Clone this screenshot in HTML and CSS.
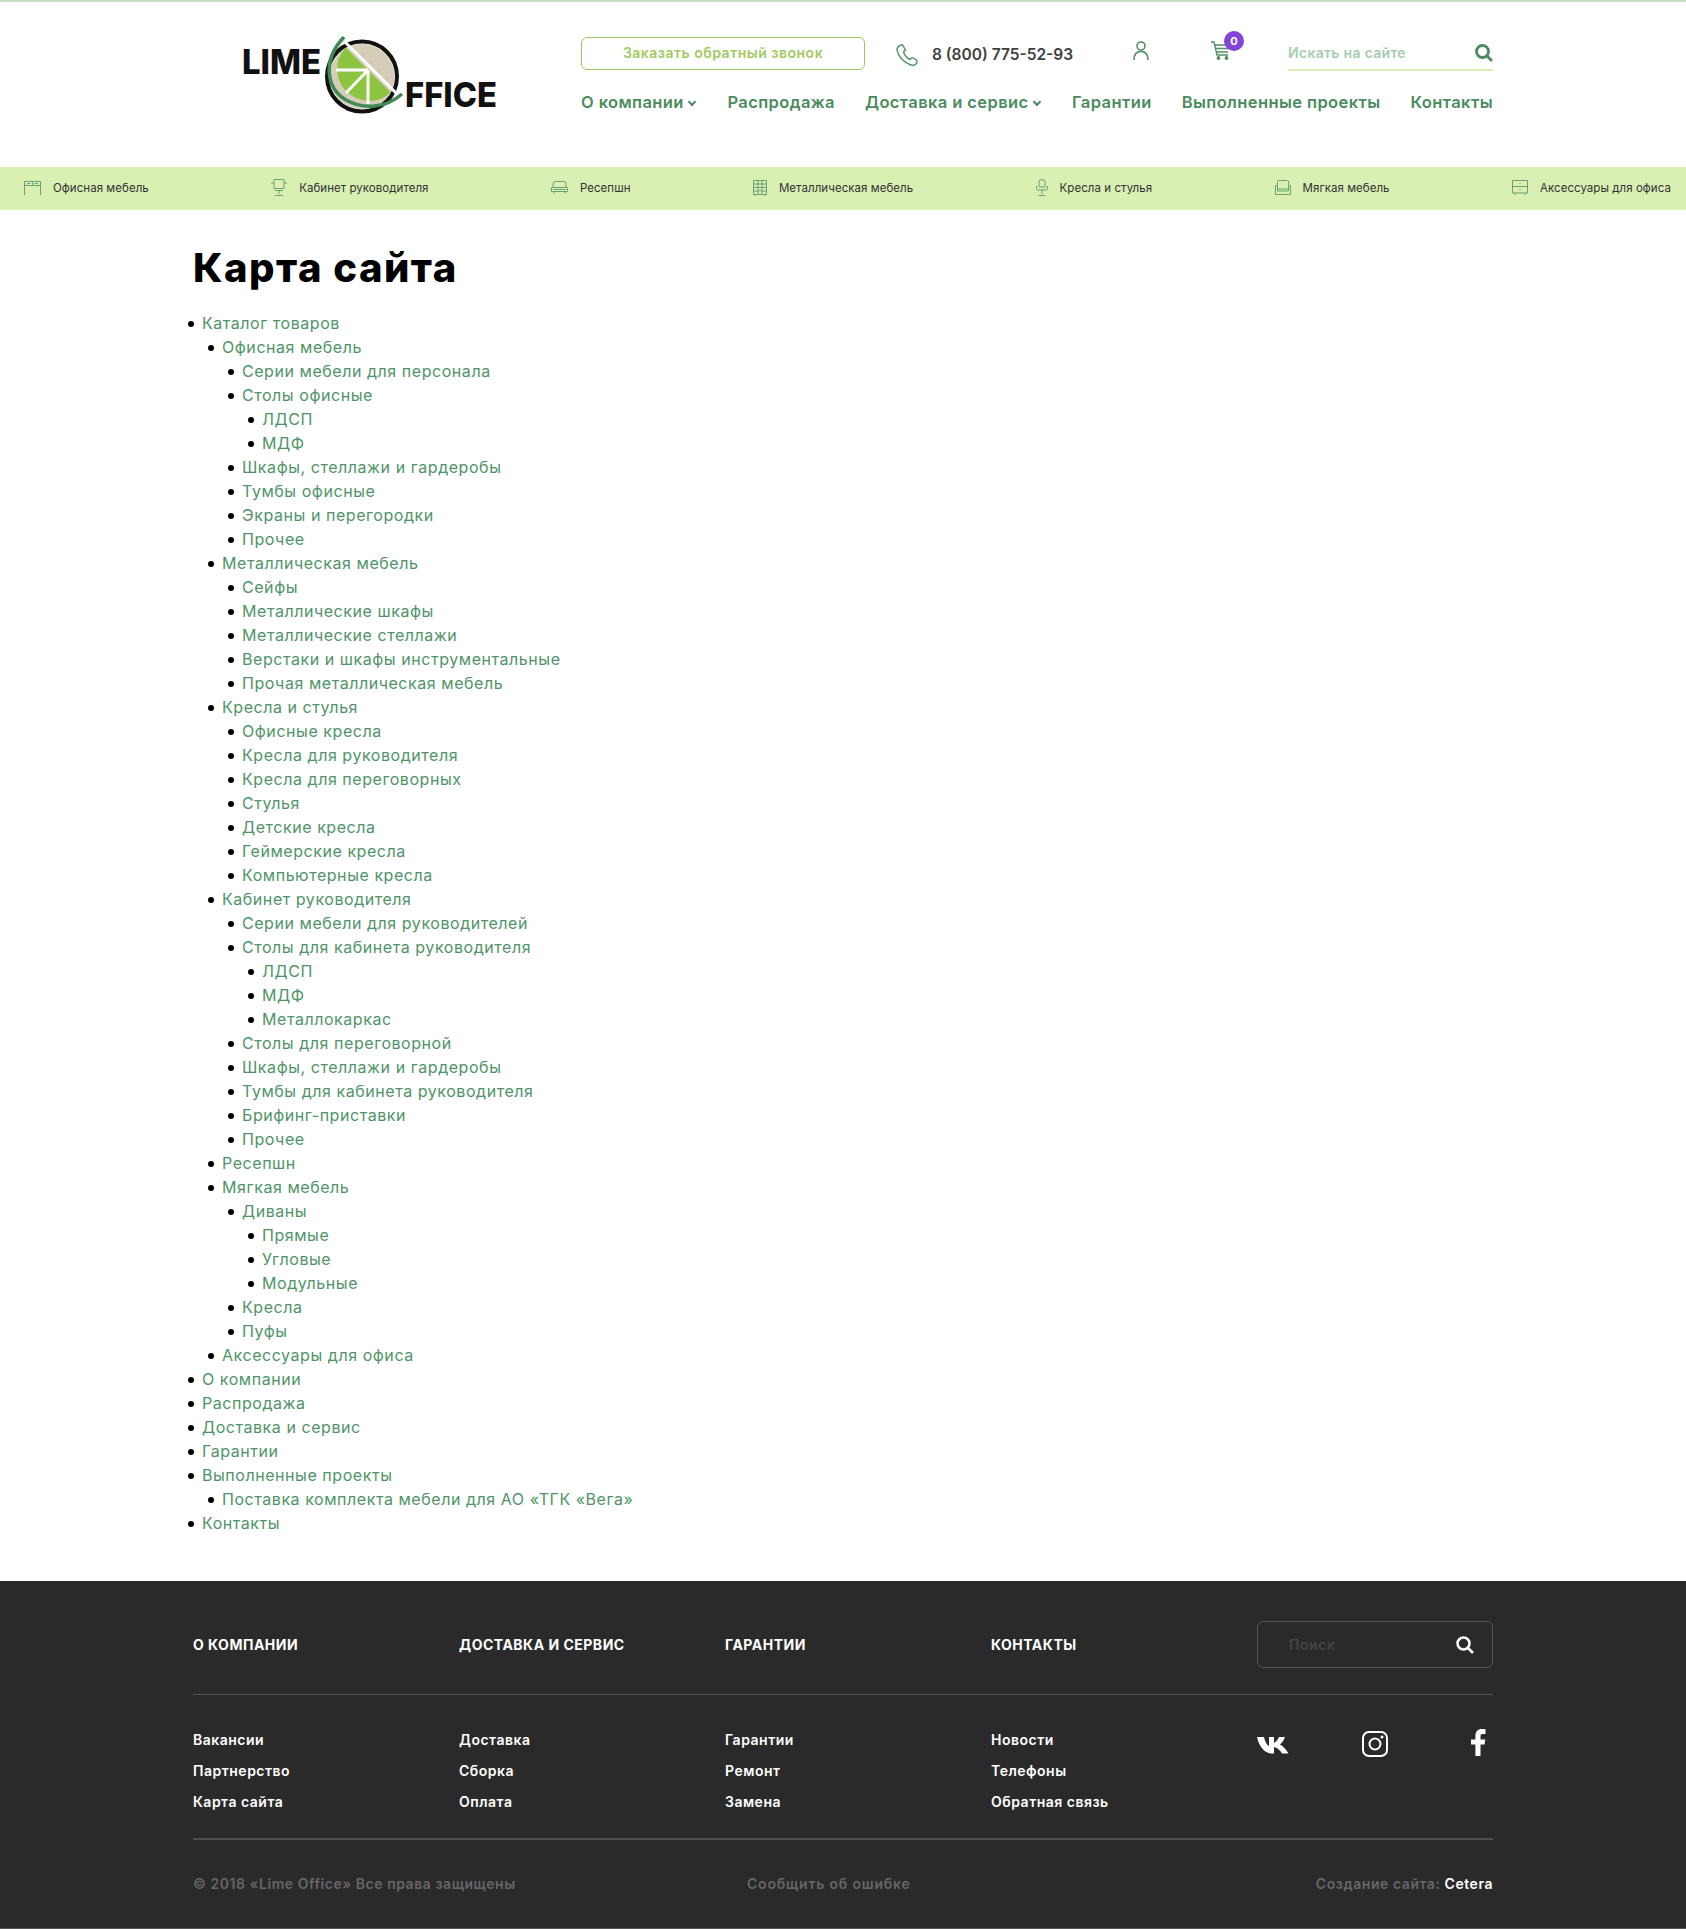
FILE: index.html
```html
<!DOCTYPE html>
<html lang="ru">
<head>
    <meta charset="UTF-8">
    <meta name="viewport" content="width=device-width, initial-scale=1.0">
    <title>Карта сайта</title>
    <link rel="stylesheet" href="styles.css">
</head>
<body>
    <header class="header">
        <div class="container header-inner">
            <a href="#" class="logo">
                <svg width="260" height="80" viewBox="240 36 260 80">
                    <circle cx="362" cy="76.5" r="35" fill="#fff" stroke="#111" stroke-width="4"/>
                    <circle cx="362" cy="76.5" r="32.500" fill="#d6cdb8"/>
                    <path d="M345.400 47.400A32 32 0 0 0 390.600 92.600Z" fill="#8cc540"/>
                    <path d="M343 40L400 97M336 70H368M368 70V104M368 70L346 93" stroke="#fff" stroke-width="3" fill="none"/>
                    <path d="M344 37C322 60 326 88 346 100C364 110 386 108 402 94" stroke="#3f8a55" stroke-width="3.500" fill="none"/>
                    <text x="242" y="74" class="logo-text" textLength="79" lengthAdjust="spacingAndGlyphs">LIME</text>
                    <text x="405" y="107" class="logo-text" textLength="92" lengthAdjust="spacingAndGlyphs">FFICE</text>
                </svg>
            </a>
            <div class="header-right">
                <div class="header-top">
                    <a href="#" class="call-btn">Заказать обратный звонок</a>
                    <a href="#" class="phone">
                        <svg width="22" height="22" viewBox="0 0 22 22" fill="none" stroke="#4f9163" stroke-width="1.400"><path d="M5 1C2 2 1 4 1 6C2 12 8 19 15 21C18 22 21 20 21 17.500L20.500 16L16 13.500L14 15.500C11 14 8.500 11 7.500 8L9.500 6L6.500 1Z"/></svg>
                        <span>8 (800) 775-52-93</span>
                    </a>
                    <a href="#" class="user-link">
                        <svg width="16" height="19" viewBox="0 0 16 19" fill="none" stroke="#4f9163" stroke-width="1.600"><circle cx="8" cy="5" r="4"/><path d="M1 19C1 13 4 10.500 8 10.500C12 10.500 15 13 15 19"/></svg>
                    </a>
                    <a href="#" class="cart-link">
                        <svg width="20" height="19" viewBox="0 0 20 19" fill="none" stroke="#4f9163" stroke-width="1.400"><path d="M0 1H3L6 14H17M4 4H19M5 7.500H18M5.500 11H17"/><circle cx="7.500" cy="17" r="1.200" fill="#4f9163"/><circle cx="15.500" cy="17" r="1.200" fill="#4f9163"/></svg>
                        <span class="cart-badge">0</span>
                    </a>
                    <form class="search">
                        <input type="text" placeholder="Искать на сайте">
                        <svg width="18" height="18" viewBox="0 0 18 18" fill="none" stroke="#4b8b5e" stroke-width="2.800"><circle cx="7.500" cy="7.500" r="6"/><path d="M12 12L17 17"/></svg>
                    </form>
                </div>
                <nav class="nav">
                    <a href="#">О компании <i class="chevron"></i></a>
                    <a href="#">Распродажа</a>
                    <a href="#">Доставка и сервис <i class="chevron"></i></a>
                    <a href="#">Гарантии</a>
                    <a href="#">Выполненные проекты</a>
                    <a href="#">Контакты</a>
                </nav>
            </div>
        </div>
    </header>

    <div class="catalog-bar">
        <a href="#"><svg width="17" height="14" viewBox="0 0 17 14" class="cat-icon"><path d="M.5 14V.5H16.500V14M.5 4.500H16.500M8.500 .5V4.500M3 2.500H6.500M10.500 2.500H14"/></svg>Офисная мебель</a>
        <a href="#"><svg width="16" height="17" viewBox="0 0 16 17" class="cat-icon"><path d="M3 .5H13V9.500H3ZM0 4H3M13 4H16M4 11.500H12M8 11.500V15M4 16.500H12"/></svg>Кабинет руководителя</a>
        <a href="#"><svg width="17" height="13" viewBox="0 0 17 13" class="cat-icon"><path d="M2 6V3Q2 .5 4.500 .5H12.500Q15 .5 15 3V6M.5 6.500H16.500V10.500H.5ZM3 10.500V12.500M14 10.500V12.500M2 8.500H15"/></svg>Ресепшн</a>
        <a href="#"><svg width="14" height="16" viewBox="0 0 14 16" class="cat-icon"><path d="M.5 .5H13.500V14.500H.5ZM.5 4H13.500M.5 7.500H13.500M.5 11H13.500M5 .5V14.500M9 .5V14.500M2 14.500V16M12 14.500V16"/></svg>Металлическая мебель</a>
        <a href="#"><svg width="12" height="17" viewBox="0 0 12 17" class="cat-icon"><path d="M3 6V3Q3 .5 6 .5Q9 .5 9 3V8H3V6M.5 7V9.500Q.5 11 2 11H10Q11.500 11 11.500 9.500V7M6 11V15M2.500 16.500H9.500"/></svg>Кресла и стулья</a>
        <a href="#"><svg width="16" height="16" viewBox="0 0 16 16" class="cat-icon"><path d="M2.500 5V1.500Q2.500 .5 3.500 .5H12.500Q13.500 .5 13.500 1.500V5M.5 5.500H2.500V11H13.500V5.500H15.500V14.500H.5ZM2.500 9H13.500"/></svg>Мягкая мебель</a>
        <a href="#"><svg width="16" height="15" viewBox="0 0 16 15" class="cat-icon"><path d="M.5 .5H15.500V13H.5ZM.5 6.500H15.500M3 13V15M13 13V15M8 3V4M8 9V10"/></svg>Аксессуары для офиса</a>
    </div>

    <main class="container content">
        <h1>Карта сайта</h1>
        <ul class="sitemap">
            <li><a href="#">Каталог товаров</a>
                <ul>
                    <li><a href="#">Офисная мебель</a>
                        <ul>
                            <li><a href="#">Серии мебели для персонала</a></li>
                            <li><a href="#">Столы офисные</a>
                                <ul>
                                    <li><a href="#">ЛДСП</a></li>
                                    <li><a href="#">МДФ</a></li>
                                </ul>
                            </li>
                            <li><a href="#">Шкафы, стеллажи и гардеробы</a></li>
                            <li><a href="#">Тумбы офисные</a></li>
                            <li><a href="#">Экраны и перегородки</a></li>
                            <li><a href="#">Прочее</a></li>
                        </ul>
                    </li>
                    <li><a href="#">Металлическая мебель</a>
                        <ul>
                            <li><a href="#">Сейфы</a></li>
                            <li><a href="#">Металлические шкафы</a></li>
                            <li><a href="#">Металлические стеллажи</a></li>
                            <li><a href="#">Верстаки и шкафы инструментальные</a></li>
                            <li><a href="#">Прочая металлическая мебель</a></li>
                        </ul>
                    </li>
                    <li><a href="#">Кресла и стулья</a>
                        <ul>
                            <li><a href="#">Офисные кресла</a></li>
                            <li><a href="#">Кресла для руководителя</a></li>
                            <li><a href="#">Кресла для переговорных</a></li>
                            <li><a href="#">Стулья</a></li>
                            <li><a href="#">Детские кресла</a></li>
                            <li><a href="#">Геймерские кресла</a></li>
                            <li><a href="#">Компьютерные кресла</a></li>
                        </ul>
                    </li>
                    <li><a href="#">Кабинет руководителя</a>
                        <ul>
                            <li><a href="#">Серии мебели для руководителей</a></li>
                            <li><a href="#">Столы для кабинета руководителя</a>
                                <ul>
                                    <li><a href="#">ЛДСП</a></li>
                                    <li><a href="#">МДФ</a></li>
                                    <li><a href="#">Металлокаркас</a></li>
                                </ul>
                            </li>
                            <li><a href="#">Столы для переговорной</a></li>
                            <li><a href="#">Шкафы, стеллажи и гардеробы</a></li>
                            <li><a href="#">Тумбы для кабинета руководителя</a></li>
                            <li><a href="#">Брифинг-приставки</a></li>
                            <li><a href="#">Прочее</a></li>
                        </ul>
                    </li>
                    <li><a href="#">Ресепшн</a></li>
                    <li><a href="#">Мягкая мебель</a>
                        <ul>
                            <li><a href="#">Диваны</a>
                                <ul>
                                    <li><a href="#">Прямые</a></li>
                                    <li><a href="#">Угловые</a></li>
                                    <li><a href="#">Модульные</a></li>
                                </ul>
                            </li>
                            <li><a href="#">Кресла</a></li>
                            <li><a href="#">Пуфы</a></li>
                        </ul>
                    </li>
                    <li><a href="#">Аксессуары для офиса</a></li>
                </ul>
            </li>
            <li><a href="#">О компании</a></li>
            <li><a href="#">Распродажа</a></li>
            <li><a href="#">Доставка и сервис</a></li>
            <li><a href="#">Гарантии</a></li>
            <li><a href="#">Выполненные проекты</a>
                <ul>
                    <li><a href="#">Поставка комплекта мебели для АО «ТГК «Вега»</a></li>
                </ul>
            </li>
            <li><a href="#">Контакты</a></li>
        </ul>
    </main>

    <footer class="footer">
        <div class="container">
            <div class="footer-top">
                <a href="#" class="footer-title">О компании</a>
                <a href="#" class="footer-title">Доставка и сервис</a>
                <a href="#" class="footer-title">Гарантии</a>
                <a href="#" class="footer-title">Контакты</a>
                <form class="footer-search">
                    <input type="text" placeholder="Поиск">
                    <svg width="18" height="18" viewBox="0 0 18 18" fill="none" stroke="#fff" stroke-width="2.500"><circle cx="7.500" cy="7.500" r="6"/><path d="M12 12L17 17"/></svg>
                </form>
            </div>
            <div class="footer-links">
                <ul>
                    <li><a href="#">Вакансии</a></li>
                    <li><a href="#">Партнерство</a></li>
                    <li><a href="#">Карта сайта</a></li>
                </ul>
                <ul>
                    <li><a href="#">Доставка</a></li>
                    <li><a href="#">Сборка</a></li>
                    <li><a href="#">Оплата</a></li>
                </ul>
                <ul>
                    <li><a href="#">Гарантии</a></li>
                    <li><a href="#">Ремонт</a></li>
                    <li><a href="#">Замена</a></li>
                </ul>
                <ul>
                    <li><a href="#">Новости</a></li>
                    <li><a href="#">Телефоны</a></li>
                    <li><a href="#">Обратная связь</a></li>
                </ul>
                <div class="social">
                    <a href="#" class="social-vk"><svg width="32" height="18" viewBox="0 0 32 18" fill="#fff"><path d="M0 1H7C8 6 10 9 12 10V1H17V7C19 6 21 3 22 1H28C27 4 25 7 23 8.500C26 10 29 13 31.500 17.500H25C23 14 20 11.500 17 11V17.500H15C8 17.500 2 11 0 1Z"/></svg></a>
                    <a href="#" class="social-insta"><svg width="26" height="26" viewBox="0 0 26 26" fill="none" stroke="#fff" stroke-width="2"><rect x="1" y="1" width="24" height="24" rx="6"/><circle cx="13" cy="13" r="5.500"/><circle cx="20" cy="6" r="1.500" fill="#fff" stroke="none"/></svg></a>
                    <a href="#" class="social-fb"><svg width="15" height="27" viewBox="0 0 15 27" fill="#fff"><path d="M9.500 27V15.500H13.500L14.300 10.500H9.500V7.500C9.500 5.800 10 5 11.800 5H14.500V.3C14 .2 12.500 0 10.800 0C7 0 4.400 2.400 4.400 6.800V10.500H0V15.500H4.400V27Z"/></svg></a>
                </div>
            </div>
            <div class="footer-bottom">
                <span>© 2018 «Lime Office» Все права защищены</span>
                <a href="#" class="report-link">Сообщить об ошибке</a>
                <span>Создание сайта: <a href="#" class="cetera">Cetera</a></span>
            </div>
        </div>
    </footer>
</body>
</html>
```

FILE: styles.css
```css
* {
    box-sizing: border-box;
}
body {
    margin: 0;
    font-family: Inter, "Noto Sans", sans-serif;
    color: #000;
    background: #fff;
}
a {
    text-decoration: none;
    color: inherit;
}
ul {
    margin: 0;
    padding: 0;
}
.container {
    width: 1300px;
    margin: 0 auto;
}

/* шапка */
.header {
    height: 167px;
    border-top: 2px solid #c5dcc9;
}
.header-inner {
    display: flex;
}
.logo {
    display: block;
    margin: 34px 0 0 47px;
    height: 80px;
}
.logo-text {
    font-family: Inter, sans-serif;
    font-weight: 800;
    font-size: 34px;
    fill: #111;
}
.header-right {
    width: 912px;
    margin-left: auto;
    padding-top: 35px;
}
.header-top {
    display: flex;
    align-items: center;
    height: 33px;
}
.call-btn {
    width: 284px;
    height: 33px;
    line-height: 30px;
    text-align: center;
    border: 1px solid #9ccb5c;
    border-radius: 6px;
    color: #a2cb62;
    font-size: 14px;
    font-weight: 600;
    letter-spacing: .5px;
}
.phone {
    display: flex;
    align-items: center;
    gap: 14px;
    margin: 2px 0 0 31px;
    color: #3f3f3f;
    font-size: 15.5px;
    font-weight: 600;
}
.user-link {
    display: block;
    height: 19px;
    margin: -6px 0 0 60px;
}
.cart-link {
    display: block;
    position: relative;
    height: 19px;
    margin: -6px 0 0 62px;
}
.cart-badge {
    position: absolute;
    top: -10px;
    left: 13px;
    width: 20px;
    height: 20px;
    border-radius: 50%;
    background: #8343d8;
    color: #fff;
    font-size: 11px;
    font-weight: 700;
    line-height: 20px;
    text-align: center;
}
.search {
    display: flex;
    align-items: center;
    width: 205px;
    height: 34px;
    margin-left: auto;
    border-bottom: 2px solid #d9f0b2;
}
.search input {
    flex: 1;
    min-width: 0;
    padding: 0;
    border: none;
    outline: none;
    font-family: inherit;
    font-size: 14px;
    font-weight: 600;
    letter-spacing: .3px;
}
.search input::placeholder {
    color: #a6cdb0;
    opacity: 1;
}
.nav {
    display: flex;
    justify-content: space-between;
    margin-top: 20px;
    color: #4b8b5e;
    font-size: 16.5px;
    font-weight: 600;
    line-height: 24px;
    letter-spacing: .4px;
}
.chevron {
    display: inline-block;
    width: 6px;
    height: 6px;
    margin: 0 2px 3px 1px;
    border-right: 2px solid #4b8b5e;
    border-bottom: 2px solid #4b8b5e;
    transform: rotate(45deg);
}

/* каталог */
.catalog-bar {
    display: flex;
    justify-content: space-between;
    align-items: center;
    height: 43px;
    padding: 0 15px 2px 24px;
    background: #d9f0b2;
    color: #333;
    font-size: 11.5px;
    letter-spacing: .05px;
}
.catalog-bar a {
    display: flex;
    align-items: center;
    gap: 12px;
}
.cat-icon {
    fill: none;
    stroke: #66a274;
    stroke-width: 1;
}

/* контент */
.content {
    padding: 34px 0 46px;
}
h1 {
    margin: 0 0 19px;
    font-size: 40px;
    font-weight: 800;
    line-height: 48px;
    letter-spacing: 1.5px;
}
.sitemap {
    margin-left: -11px;
    list-style: none;
}
.sitemap ul {
    list-style: none;
}
.sitemap li {
    padding-left: 20px;
    font-size: 16px;
    line-height: 24px;
}
.sitemap li::before {
    content: "";
    display: inline-block;
    width: 6px;
    height: 6px;
    margin: 0 8px 1px -14px;
    border-radius: 50%;
    background: #000;
    vertical-align: middle;
}
.sitemap a {
    color: #4f9468;
    letter-spacing: .55px;
}

/* подвал */
.footer {
    height: 348px;
    padding-top: 40px;
    border-bottom: 1px solid #555;
    background: #2a2a2a;
    color: #fff;
}
.footer-top {
    display: grid;
    grid-template-columns: repeat(4, 266px) 1fr;
    align-items: center;
    padding-bottom: 26px;
    border-bottom: 1px solid #555;
}
.footer-title {
    font-size: 14px;
    font-weight: 700;
    letter-spacing: .5px;
    text-transform: uppercase;
}
.footer-search {
    display: flex;
    align-items: center;
    min-width: 0;
    height: 47px;
    padding: 0 18px 0 31px;
    border: 1px solid #555;
    border-radius: 6px;
}
.footer-search input {
    flex: 1;
    min-width: 0;
    padding: 0;
    border: none;
    outline: none;
    background: none;
    color: #fff;
    font-family: inherit;
    font-size: 14px;
    font-weight: 600;
    letter-spacing: .5px;
}
.footer-search input::placeholder {
    color: #444;
    opacity: 1;
}
.footer-links {
    display: grid;
    grid-template-columns: repeat(4, 266px) 1fr;
    padding: 29px 0 21px;
    border-bottom: 2px solid #505050;
    font-size: 14px;
    font-weight: 600;
    line-height: 31px;
    letter-spacing: .5px;
}
.footer-links ul {
    list-style: none;
}
.social {
    display: flex;
    align-items: flex-start;
}
.social a {
    display: block;
    line-height: 0;
}
.social-vk {
    margin-top: 12px;
}
.social-insta {
    margin: 7px 0 0 73px;
}
.social-fb {
    margin: 5px 0 0 83px;
}
.footer-bottom {
    display: grid;
    grid-template-columns: 554px 1fr auto;
    padding-top: 32px;
    color: #666;
    font-size: 14px;
    font-weight: 600;
    line-height: 24px;
    letter-spacing: .55px;
}
.report-link {
    letter-spacing: .8px;
}
.cetera {
    color: #fff;
}
```
